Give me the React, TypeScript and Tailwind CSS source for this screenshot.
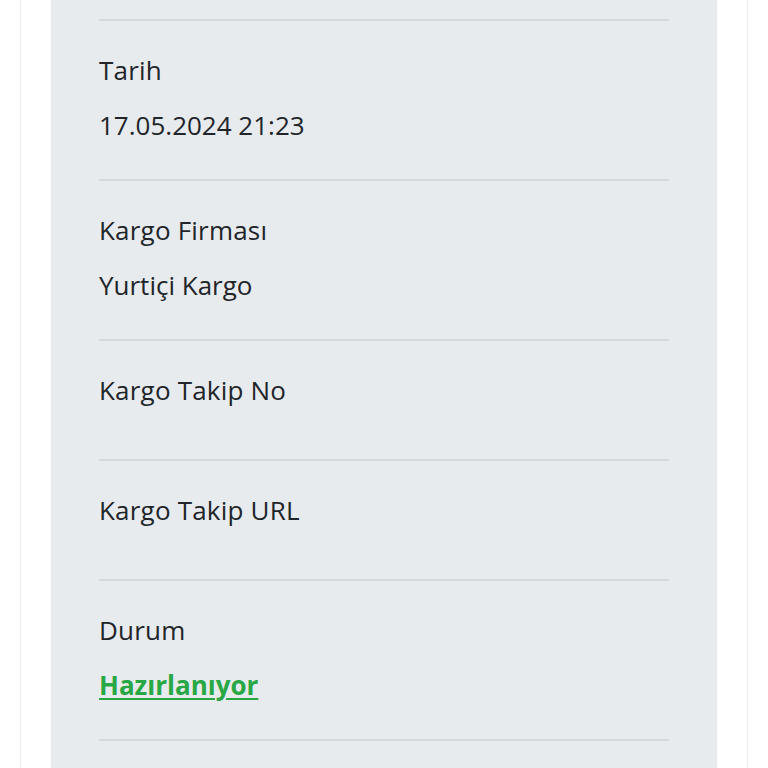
import React from "react";

const rows: { label: string; value?: string; status?: boolean }[] = [
  { label: "Tarih", value: "17.05.2024 21:23" },
  { label: "Kargo Firması", value: "Yurtiçi Kargo" },
  { label: "Kargo Takip No" },
  { label: "Kargo Takip URL" },
  { label: "Durum", value: "Hazırlanıyor", status: true },
];

export default function App() {
  return (
    <div
      className="h-[768px] w-[768px] overflow-hidden bg-white"
      style={{ fontFamily: '"Open Sans", "Liberation Sans", sans-serif' }}
    >
      <div className="ml-[20px] h-full w-[728px] border-x border-[#eeeeee] px-[30px]">
        <div className="h-full bg-[#e8ebee] px-[48px] pt-[19px]">
          {rows.map((r) => (
            <div key={r.label} className="border-t-2 border-[#d6d9dc] pt-[29px] pb-[34px]">
              <p className="mb-[15px] text-[26px] leading-[40px] tracking-[0.2px] text-[#212529]">{r.label}</p>
              {r.value ? (
                r.status ? (
                  <p className="text-[26px] leading-[40px] font-bold text-[#28a745] underline decoration-2 underline-offset-[3px]">
                    {r.value}
                  </p>
                ) : (
                  <p className="text-[26px] leading-[40px] text-[#212529]">{r.value}</p>
                )
              ) : null}
            </div>
          ))}
          <div className="border-t-2 border-[#d6d9dc]" />
        </div>
      </div>
    </div>
  );
}
